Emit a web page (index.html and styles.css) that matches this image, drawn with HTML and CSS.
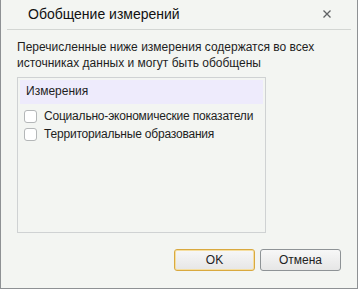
FILE: index.html
```html
<!DOCTYPE html>
<html lang="ru">
<head>
  <meta charset="UTF-8">
  <title>Обобщение измерений</title>
  <link rel="stylesheet" href="styles.css">
</head>
<body>
  <div class="dialog">
    <div class="dialog-head">
      <span class="dialog-title">Обобщение измерений</span>
      <svg class="close-btn" width="8" height="8" viewBox="0 0 8 8">
        <path d="M0.5 0.5 L7.5 7.5 M7.5 0.5 L0.5 7.5" stroke="#5f6264" stroke-width="1.3"/>
      </svg>
    </div>
    <div class="dialog-body">
      <p class="hint">Перечисленные ниже измерения содержатся во всех источниках данных и могут быть обобщены</p>
      <div class="dim-list">
        <div class="dim-head">Измерения</div>
        <label class="dim-row"><span class="check"></span>Социально-экономические показатели</label>
        <label class="dim-row"><span class="check"></span>Территориальные образования</label>
      </div>
    </div>
    <div class="dialog-foot">
      <button class="btn btn-default">OK</button>
      <button class="btn">Отмена</button>
    </div>
  </div>
</body>
</html>
```

FILE: styles.css
```css
* { box-sizing: border-box; }
body {
  margin: 0;
  font-family: "Liberation Sans", Arial, sans-serif;
  font-size: 12px;
  color: #1e1e1e;
  background: #fff;
}
.dialog {
  width: 358px;
  height: 289px;
  background: #f3f5f2;
  border: 1px solid #8e9194;
  border-top: none;
  display: flex;
  flex-direction: column;
}
.dialog-head {
  height: 30px;
  margin: 0 6px;
  padding: 0 20px 1px 21px;
  border-bottom: 1px solid #d3d6d3;
  display: flex;
  align-items: center;
  justify-content: space-between;
}
.dialog-title {
  font-size: 14px;
  color: #111;
}
.dialog-body {
  padding: 9px 16px 0 16px;
  flex: 1;
}
.hint {
  width: 300px;
  margin: 0 0 6px;
  line-height: 16px;
}
.dim-list {
  width: 249px;
  height: 156px;
  border: 1px solid #cfd2d3;
  padding: 2px;
}
.dim-head {
  height: 24px;
  background: #eeebfc;
  padding: 0 6px;
  line-height: 23px;
}
.dim-row {
  display: flex;
  align-items: center;
  height: 18px;
  padding-left: 4px;
  gap: 7px;
  white-space: nowrap;
  letter-spacing: -0.2px;
}
.dim-row:first-of-type { margin-top: 3px; }
.check {
  width: 13px;
  height: 13px;
  border: 1px solid #b4b7b8;
  border-radius: 3px;
  background: #fff;
}
.dialog-foot {
  display: flex;
  justify-content: flex-end;
  gap: 5px;
  padding: 0 16px 17px;
}
.btn {
  width: 81px;
  height: 22px;
  font-family: inherit;
  font-size: 12px;
  color: #222;
  border: 1px solid #8e9396;
  border-radius: 3px;
  background: linear-gradient(#f7f7f7, #e6e6e6);
}
.btn-default {
  border: 1px solid #d9a93f;
  box-shadow: inset 0 0 0 1px #f5dea0;
}
```
